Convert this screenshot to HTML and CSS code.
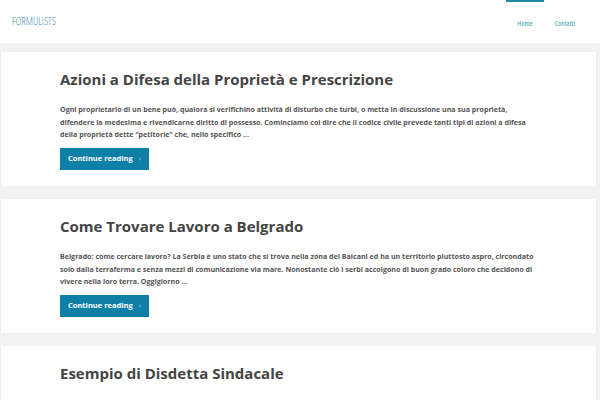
FILE: index.html
```html
<!DOCTYPE html>
<html lang="it">
<head>
    <meta charset="UTF-8">
    <title>Formulists</title>
    <link rel="stylesheet" href="styles.css">
</head>
<body>
    <header class="topbar">
        <a href="#" class="logo">FORMULISTS</a>
        <nav class="menu">
            <a href="#" class="active">Home</a>
            <a href="#">Contatti</a>
        </nav>
    </header>
    <main class="posts">
        <article class="post">
            <h2>Azioni a Difesa della Proprietà e Prescrizione</h2>
            <p>Ogni proprietario di un bene può, qualora si verifichino attività di disturbo che turbi, o metta in discussione una sua proprietà, difendere la medesima e rivendicarne diritto di possesso. Cominciamo col dire che il codice civile prevede tanti tipi di azioni a difesa della proprietà dette “petitorie” che, nello specifico …</p>
            <a href="#" class="btn">Continue reading <span class="chev">›</span></a>
        </article>
        <article class="post">
            <h2>Come Trovare Lavoro a Belgrado</h2>
            <p>Belgrado: come cercare lavoro? La Serbia è uno stato che si trova nella zona dei Balcani ed ha un territorio piuttosto aspro, circondato solo dalla terraferma e senza mezzi di comunicazione via mare. Nonostante ciò i serbi accolgono di buon grado coloro che decidono di vivere nella loro terra. Oggigiorno …</p>
            <a href="#" class="btn">Continue reading <span class="chev">›</span></a>
        </article>
        <article class="post">
            <h2>Esempio di Disdetta Sindacale</h2>
        </article>
    </main>
</body>
</html>
```

FILE: styles.css
```css
body {
    margin: 0;
    font-family: 'Open Sans', sans-serif;
    background: #f2f2f2;
    color: #555;
}
.topbar {
    background: #fff;
    height: 43px;
    display: flex;
    justify-content: space-between;
    align-items: center;
    margin-bottom: 9px;
}
.logo {
    font-size: 10.5px;
    font-weight: 300;
    font-stretch: 75%;
    color: #3f8fb3;
    text-decoration: none;
    margin-left: 12px;
    margin-top: -2px;
}
.menu {
    display: flex;
    height: 100%;
    margin-right: 14px;
}
.menu a {
    font-size: 7.5px;
    font-stretch: 75%;
    color: #3a9fb0;
    text-decoration: none;
    padding: 0 11px;
    display: flex;
    align-items: center;
    border-top: 2px solid transparent;
}
.menu a.active {
    border-top-color: #1c8aa3;
}
.posts {
    display: flex;
    flex-direction: column;
    gap: 13px;
}
.post {
    background: #fff;
    border-left: 1px solid #ececec;
    border-right: 1px solid #ececec;
    margin-right: 3px;
    padding: 15px 57px 17px 59px;
    height: 102px;
}
.post h2 {
    margin: 0;
    font-size: 15px;
    font-weight: 700;
    color: #444;
    line-height: 24px;
}
.post p {
    margin: 12px 0 3px;
    font-size: 7.1px;
    font-weight: 700;
    line-height: 12.5px;
    color: #555;
    max-width: 484px;
}
.btn {
    display: inline-block;
    background: #0e7fa6;
    color: #fff;
    font-size: 7.5px;
    font-weight: 700;
    text-decoration: none;
    padding: 0 8px;
    height: 22px;
    line-height: 21px;
}
.chev {
    margin-left: 4px;
    font-weight: 400;
    color: #b8dbe8;
}
```
